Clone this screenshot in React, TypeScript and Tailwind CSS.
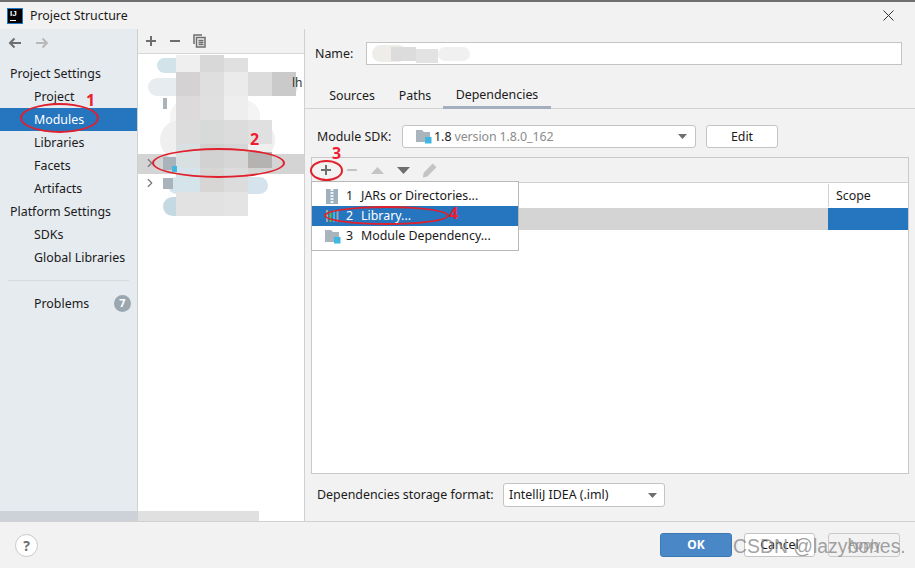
import { ChevronRight } from "lucide-react"

const sideItems = [
  { label: "Project Settings", head: true },
  { label: "Project" },
  { label: "Modules", selected: true },
  { label: "Libraries" },
  { label: "Facets" },
  { label: "Artifacts" },
  { label: "Platform Settings", head: true },
  { label: "SDKs" },
  { label: "Global Libraries" },
]

// smudges over the blurred module names
const blobs = [
  "left-[157px] top-[58px] w-[60px] h-[15px] bg-[#d3e3ea] rounded-full",
  "left-[148px] top-[78px] w-[150px] h-[18px] bg-[#e6ecf0] rounded-full",
  "left-[170px] top-[100px] w-[90px] h-[50px] bg-[#f4f4f4] rounded-2xl",
  "left-[160px] top-[120px] w-[115px] h-[40px] bg-[#efefef] rounded-3xl",
  "left-[168px] top-[177px] w-[100px] h-[17px] bg-[#d5e4ec] rounded-full",
  "left-[163px] top-[197px] w-[30px] h-[19px] bg-[#c5d9e2] rounded-full",
]

const mosaic = [
  "left-[176px] top-[55px] h-[17px] bg-[#efefef]",
  "left-[200px] top-[55px] h-[17px] bg-[#d8d8d8]",
  "left-[224px] top-[58px] h-[14px] bg-[#e0e0e0]",
  "left-[176px] top-[72px] h-[24px] bg-[#d4d2d2]",
  "left-[200px] top-[72px] h-[24px] bg-[#dfdfdf]",
  "left-[224px] top-[72px] h-[24px] bg-[#ebebeb]",
  "left-[248px] top-[72px] h-[24px] bg-[#dcdcdc]",
  "left-[272px] top-[72px] h-[24px] bg-[#cacaca]",
  "left-[176px] top-[96px] h-[24px] bg-[#dcdada]",
  "left-[200px] top-[96px] h-[24px] bg-[#e0e0e0]",
  "left-[224px] top-[96px] h-[24px] bg-[#eeeeee]",
  "left-[176px] top-[120px] h-[24px] bg-[#dcdcdc]",
  "left-[200px] top-[120px] h-[24px] bg-[#d8dada]",
  "left-[224px] top-[120px] h-[24px] bg-[#dcdcdc]",
  "left-[248px] top-[120px] h-[24px] bg-[#e0e0e0]",
  "left-[176px] top-[144px] h-[24px] bg-[#d8e0e2]",
  "left-[200px] top-[144px] h-[24px] bg-[#d2d2d2]",
  "left-[224px] top-[144px] h-[24px] bg-[#d6d6d6]",
  "left-[248px] top-[152px] h-[16px] bg-[#b5b3b1]",
  "left-[176px] top-[168px] h-[24px] bg-[#d5e3ea]",
  "left-[200px] top-[168px] h-[24px] bg-[#d8d6d4]",
  "left-[224px] top-[168px] h-[24px] bg-[#dcdcdc]",
  "left-[176px] top-[192px] h-[24px] bg-[#e2e2e2]",
  "left-[200px] top-[192px] h-[24px] bg-[#e2e2e2]",
  "left-[224px] top-[192px] h-[24px] bg-[#e4e4e4]",
]

function Arrow({ right, color }: { right?: boolean; color: string }) {
  return (
    <svg width="14" height="12" viewBox="0 0 14 12" fill="none" stroke={color} strokeWidth="2" className={right ? "rotate-180" : ""}>
      <path d="M13 6H2M6.5 1.5 2 6l4.5 4.5" />
    </svg>
  )
}

function Caret() {
  return (
    <svg width="9" height="5" viewBox="0 0 9 5"><path d="M0 0h9L4.5 5z" fill="#6e6e6e" /></svg>
  )
}

function Folder({ badge }: { badge?: boolean }) {
  return (
    <svg width="16" height="15" viewBox="0 0 16 15">
      <path d="M0 1h6l2 2h6v10H0z" fill="#aab4bc" />
      {badge && <rect x="9" y="8" width="6.500" height="6.500" fill="#40b6e0" />}
    </svg>
  )
}

export default function App() {
  return (
    <div className="relative w-[915px] h-[568px] overflow-hidden flex flex-col bg-[#f2f2f2] text-[12.400px] text-[#1a1a1a] font-['Noto_Sans',sans-serif]">
      {/* title bar */}
      <div className="h-[29px] flex items-center border-t-2 border-t-[#6f6f6f] pl-[7px] pr-[21px] shrink-0">
        <div className="w-[16px] h-[16px] bg-black border border-[#1f74c4] flex flex-col text-white text-[8px] font-bold leading-[9px] pl-[2px] font-['Liberation_Sans',sans-serif]">
          IJ
          <div className="w-[6px] h-[1px] bg-white mt-[2px]" />
        </div>
        <span className="ml-[7px] pt-[1px]">Project Structure</span>
        <svg className="ml-auto" width="11" height="11" viewBox="0 0 11 11" stroke="#333" fill="none"><path d="M.5.500l10 10M10.500.500l-10 10" /></svg>
      </div>

      {/* body */}
      <div className="flex h-[492px] shrink-0">
        <aside className="relative w-[137px] shrink-0 bg-[#e6ebf0] border-r border-[#d0d0d0] box-content">
          <div className="h-[28px] flex items-center gap-[13px] pl-[8px]">
            <Arrow color="#6e6e6e" />
            <Arrow right color="#b8b8b8" />
          </div>
          <div className="mt-[5px]">
            {sideItems.map((item) => (
              <div
                key={item.label}
                className={`h-[23px] flex items-center pt-[2px] ${item.head ? "pl-[10px]" : "pl-[34px]"} ${item.selected ? "bg-[#2675bf] text-white" : ""}`}
              >
                {item.label}
              </div>
            ))}
          </div>
          <div className="mt-[11px] h-px mx-[8px] bg-[#d5dade]" />
          <div className="mt-[11px] h-[23px] flex items-center justify-between pl-[34px] pr-[6px]">
            <span className="pt-[2px]">Problems</span>
            <span className="w-[17px] h-[17px] rounded-full bg-[#9aa7b0] text-white text-[11px] font-bold flex items-center justify-center">7</span>
          </div>
          <div className="absolute left-0 right-0 bottom-0 h-[10px] bg-[#cdd2d8]" />
        </aside>

        <section className="relative w-[166px] shrink-0 bg-white border-r border-[#d0d0d0] box-content">
          <div className="h-[24px] bg-[#f2f2f2] border-b border-[#d6d6d6] flex items-center gap-[12px] pl-[7px] box-content">
            <svg width="12" height="12" viewBox="0 0 12 12" stroke="#6e6e6e" strokeWidth="2"><path d="M6 1v10M1 6h10" /></svg>
            <svg width="12" height="12" viewBox="0 0 12 12" stroke="#6e6e6e" strokeWidth="2"><path d="M1 6h10" /></svg>
            <svg width="13" height="14" viewBox="0 0 13 14" fill="none" stroke="#6e6e6e" strokeWidth="1.500"><path d="M1 10V1h8" /><path d="M3.500 3.500h8.500v9.500H3.500zM5.500 6.500h5M5.500 8.500h5M5.500 10.500h5" /></svg>
          </div>
          <div className="absolute left-0 bottom-0 h-[10px] w-[121px] bg-[#e0e0e0]" />
        </section>

        {/* module settings */}
        <main className="flex-1 flex flex-col min-w-0">
          <div className="flex items-center pt-[13px] pl-[10px] pr-[13px]">
            <span className="w-[51px] pt-[2px]">Name:</span>
            <div className="flex-1 h-[23px] bg-white border border-[#c4c4c4]" />
          </div>
          <div className="mt-[17px] h-[27px] flex border-b border-[#d1d1d1] pl-[12px]">
            <div className="w-[70px] h-[26px] flex items-center justify-center pt-[2px]">Sources</div>
            <div className="w-[56px] h-[26px] flex items-center justify-center pt-[2px]">Paths</div>
            <div className="w-[108px] h-[27px] flex items-center justify-center border-b-[3px] border-[#a3afbf] pt-[2px]">Dependencies</div>
          </div>
          <div className="mt-[16px] flex items-center pl-[12px]">
            <span className="w-[85px] pt-[2px]">Module SDK:</span>
            <div className="w-[294px] h-[23px] bg-white border border-[#c4c4c4] rounded-[3px] flex items-center pl-[13px] pr-[8px]">
              <Folder badge />
              <span className="ml-[2px] pt-[2px]">1.8</span>
              <span className="ml-[3px] pt-[2px] text-[#8c8c8c] tracking-[-0.1px]">version 1.8.0_162</span>
              <span className="ml-auto flex"><Caret /></span>
            </div>
            <div className="ml-[10px] w-[72px] h-[23px] bg-white border border-[#c4c4c4] rounded-[3px] flex items-center justify-center pt-[2px]">Edit</div>
          </div>

          <div className="mt-[9px] ml-[6px] mr-[6px] h-[317px] border border-[#c9c9c9] flex flex-col bg-white">
            <div className="h-[24px] bg-[#f2f2f2] border-b border-[#d1d1d1] flex items-center pl-[8px] box-content shrink-0">
              <svg width="12" height="12" viewBox="0 0 12 12" stroke="#6e6e6e" strokeWidth="2"><path d="M6 1v10M1 6h10" /></svg>
              <svg className="ml-[14px]" width="12" height="12" viewBox="0 0 12 12" stroke="#c4c4c4" strokeWidth="2"><path d="M1 6h10" /></svg>
              <svg className="ml-[13px]" width="13" height="7" viewBox="0 0 13 7"><path d="M0 7h13L6.500 0z" fill="#c4c4c4" /></svg>
              <svg className="ml-[13px]" width="13" height="7" viewBox="0 0 13 7"><path d="M0 0h13L6.500 7z" fill="#6e6e6e" /></svg>
              <svg className="ml-[12px]" width="15" height="15" viewBox="0 0 14 14"><path d="M10 .500 13.500 4 5 12.500.800 13.500 1.500 9zM9 3l2.500 2.500" fill="#c4c4c4" /></svg>
            </div>
            <div className="h-[25px] flex justify-end shrink-0">
              <div className="w-[80px] border-l border-[#d1d1d1] pl-[7px] pt-[2px] flex items-center my-px">Scope</div>
            </div>
            <div className="h-[22px] flex justify-end bg-[#d4d4d4] shrink-0">
              <div className="w-[80px] bg-[#2675bf]" />
            </div>
          </div>

          <div className="mt-[9px] flex items-center pl-[12px]">
            <span className="w-[186px]">Dependencies storage format:</span>
            <div className="w-[162px] h-[24px] bg-white border border-[#c4c4c4] rounded-[3px] flex items-center pl-[5px] pr-[7px]">
              IntelliJ IDEA (.iml)
              <span className="ml-auto flex"><Caret /></span>
            </div>
          </div>
        </main>
      </div>

      {/* footer */}
      <footer className="flex-1 border-t border-[#d1d1d1] flex items-center pl-[15px] pr-[15px]">
        <div className="w-[23px] h-[23px] rounded-full bg-white border border-[#c9c9c9] flex items-center justify-center text-[#6e6e6e] text-[14px] font-bold">?</div>
        <div className="ml-auto flex">
          <div className="w-[72px] h-[24px] rounded-[3px] bg-[#4a87c7] border border-[#3c77b5] text-white font-bold text-[12px] flex items-center justify-center">OK</div>
          <div className="ml-[12px] w-[71px] h-[24px] rounded-[3px] bg-white border border-[#c4c4c4] flex items-center justify-center">Cancel</div>
          <div className="ml-[13px] w-[72px] h-[24px] rounded-[3px] border border-[#c9c9c9] text-[#a0a0a0] flex items-center justify-center">Apply</div>
        </div>
      </footer>

      {/* blurred tree content */}
      <div className="absolute left-[138px] top-[154px] w-[166px] h-[20px] bg-[#d4d4d4]" />
      {blobs.map((b) => <div key={b} className={`absolute ${b}`} />)}
      {mosaic.map((m) => <div key={m} className={`absolute w-[24px] ${m}`} />)}
      <span className="absolute left-[292px] top-[74px] text-[12px] text-[#333]">lh</span>
      <ChevronRight className="absolute left-[143px] top-[156px] text-[#777]" size={14} />
      <ChevronRight className="absolute left-[143px] top-[176px] text-[#777]" size={14} />
      <div className="absolute left-[163px] top-[157px] w-[13px] h-[13px] bg-[#a9b3bb]" />
      <div className="absolute left-[172px] top-[166px] w-[5px] h-[6px] bg-[#40b6e0]" />
      <div className="absolute left-[163px] top-[178px] w-[10px] h-[11px] bg-[#a9b3bb]" />
      <div className="absolute left-[163px] top-[98px] w-[4px] h-[11px] bg-[#a9b3bb]" />
      {/* name field smudge */}
      <div className="absolute left-[372px] top-[45px] w-[35px] h-[17px] bg-[#eeede9] rounded-full" />
      <div className="absolute left-[391px] top-[47px] w-[25px] h-[14px] bg-[#dcdcdc]" />
      <div className="absolute left-[416px] top-[49px] w-[22px] h-[14px] bg-[#e2e2e2]" />
      <div className="absolute left-[438px] top-[47px] w-[32px] h-[14px] bg-[#f0f0f0] rounded-full" />

      {/* add dependency popup */}
      <div className="absolute left-[311px] top-[181px] w-[208px] h-[70px] bg-white border border-[#b9b9b9] py-[4px]">
        <div className="h-[20px] flex items-center pl-[14px]">
          <svg width="12" height="15" viewBox="0 0 12 15"><rect width="12" height="15" fill="#9fb0bc" /><path d="M6 0v15" stroke="#e8f4fa" strokeWidth="3" strokeDasharray="2 1" /></svg>
          <span className="ml-[8px] w-[15px]">1</span>JARs or Directories...
        </div>
        <div className="h-[20px] flex items-center pl-[13px] bg-[#2675bf] text-white">
          <svg width="14" height="12" viewBox="0 0 14 12"><path d="M1 0h2v12H1z" fill="#9aa7b0" /><path d="M4.500 1h2v11h-2z" fill="#62b543" /><path d="M8 0h2v12H8z" fill="#40b6e0" /><path d="M11.500 1h2v11h-2z" fill="#9aa7b0" /></svg>
          <span className="ml-[7px] w-[15px]">2</span>Library...
        </div>
        <div className="h-[20px] flex items-center pl-[13px]">
          <Folder badge />
          <span className="ml-[5px] w-[15px]">3</span>Module Dependency...
        </div>
      </div>

      {/* red annotations */}
      <div className="absolute left-[20px] top-[103px] w-[79px] h-[30px] rounded-[50%] border-2 border-[#e0202c]" />
      <div className="absolute left-[152px] top-[148px] w-[133px] h-[30px] rounded-[50%] border-2 border-[#e0202c]" />
      <div className="absolute left-[310px] top-[160px] w-[33px] h-[21px] rounded-[50%] border-2 border-[#e0202c]" />
      <div className="absolute left-[324px] top-[206px] w-[125px] h-[19px] rounded-[50%] border-2 border-[#e0202c]" />
      <span className="absolute left-[86px] top-[90px] text-[16px] font-bold text-[#f01c30] leading-[20px]">1</span>
      <span className="absolute left-[250px] top-[129px] text-[16px] font-bold text-[#f01c30] leading-[20px]">2</span>
      <span className="absolute left-[332px] top-[143px] text-[16px] font-bold text-[#f01c30] leading-[20px]">3</span>
      <span className="absolute left-[449px] top-[203px] text-[16px] font-bold text-[#f01c30] leading-[20px]">4</span>

      {/* csdn watermark */}
      <span className="absolute left-[733px] top-[531px] whitespace-nowrap text-[19.400px] leading-[30px] text-[#8a8a8a]/80 font-['Liberation_Sans',sans-serif]">CSDN @lazybones.</span>
    </div>
  )
}
